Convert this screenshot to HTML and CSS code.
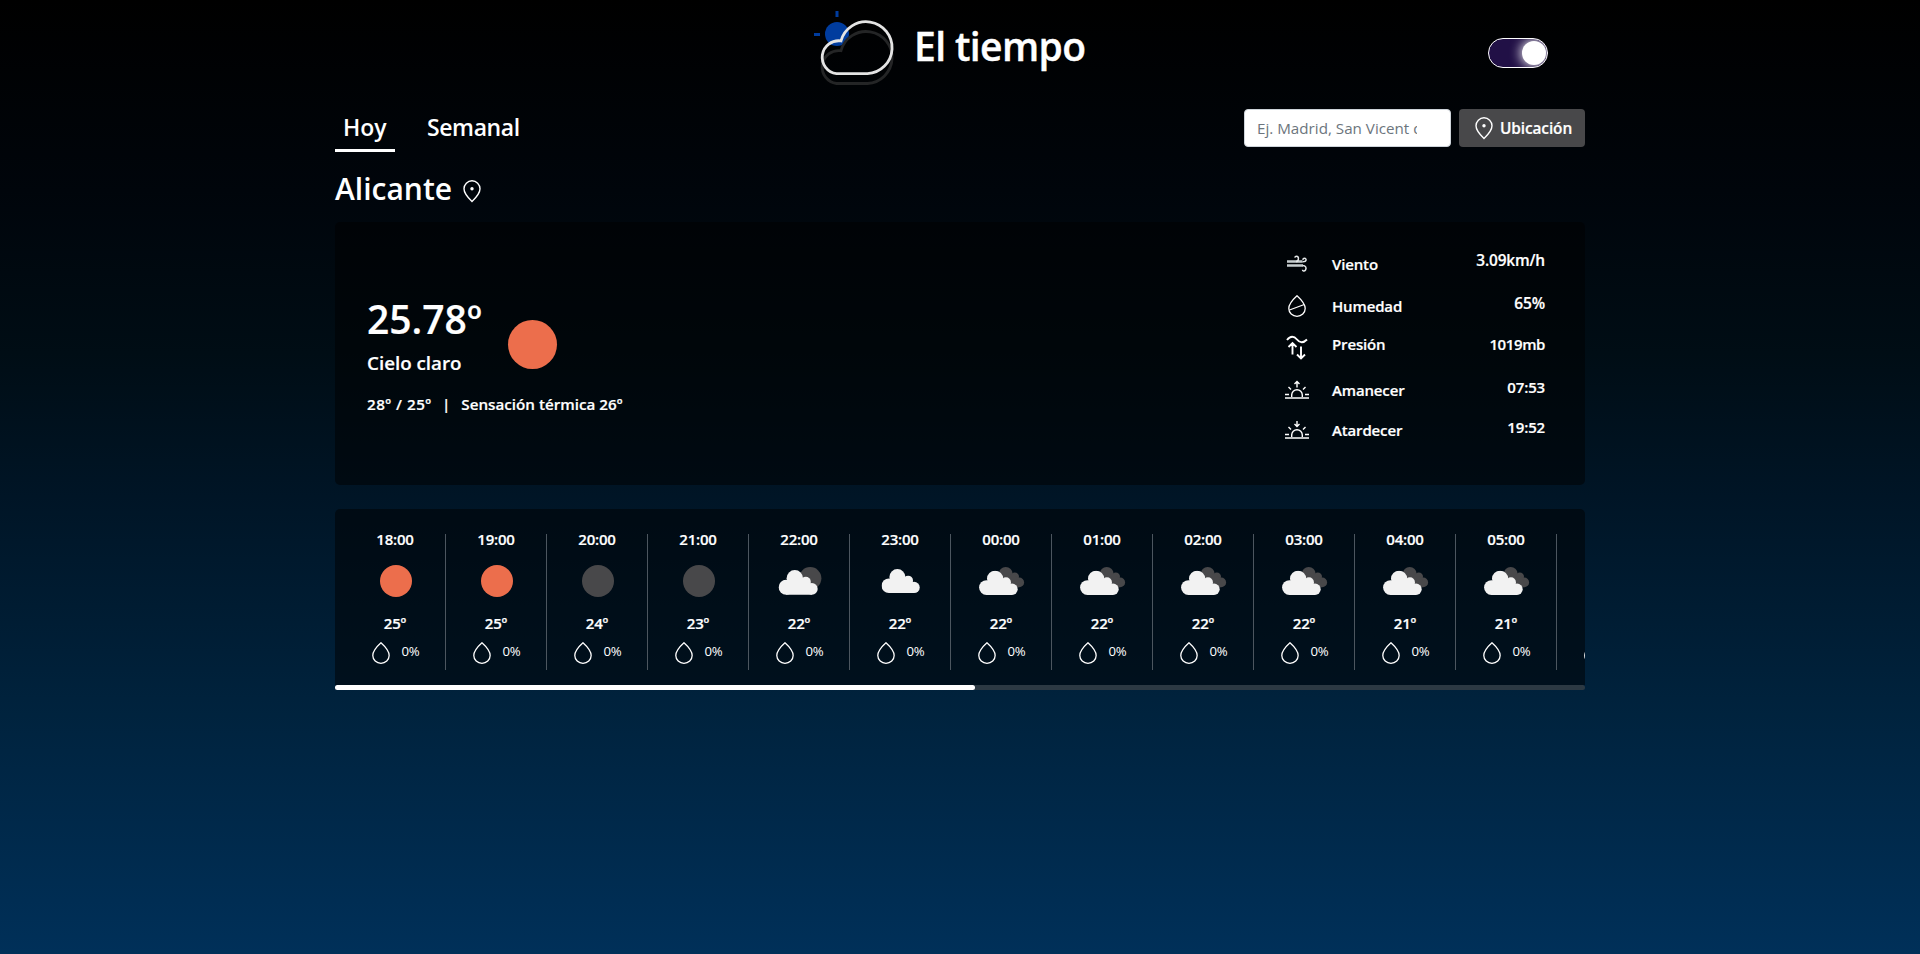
FILE: index.html
```html
<!DOCTYPE html>
<html lang="es">
<head>
<meta charset="utf-8">
<title>El tiempo</title>
<link rel="stylesheet" href="styles.css">
</head>
<body>
<svg class="defs" width="0" height="0" aria-hidden="true">
  <symbol id="pin" viewBox="0 0 20 24"><path d="M10 22.500C10 22.500 2 15 2 9.800a8 8 0 0 1 16 0C18 15 10 22.500 10 22.500Z" fill="none" stroke="#fff" stroke-width="1.400"/><circle cx="10" cy="9.800" r="1.700" fill="#fff"/></symbol>
  <symbol id="drop" viewBox="0 0 20 24"><path d="M10 1.800C10 1.800 1.800 9.200 1.800 14.600a8.200 7.700 0 0 0 16.400 0C18.200 9.200 10 1.800 10 1.800Z" fill="none" stroke="#fff" stroke-width="1.300"/></symbol>
  <symbol id="cloud" viewBox="0 0 40 25"><circle cx="7.600" cy="17.200" r="7.500"/><circle cx="16.300" cy="8.300" r="8.200"/><circle cx="27.300" cy="11.800" r="5"/><circle cx="33.400" cy="18.900" r="5.800"/><path d="M7.600 12h24l1.800 6v6.700H7.600Z"/></symbol>
  <symbol id="sun" viewBox="0 0 48 40"><circle cx="25" cy="20" r="16" fill="#ec6e4c"/></symbol>
  <symbol id="moon" viewBox="0 0 48 40"><circle cx="25" cy="20" r="16" fill="#48484a"/></symbol>
  <symbol id="few" viewBox="0 0 48 40"><circle cx="35.200" cy="17.300" r="11.200" fill="#48484a"/><use href="#cloud" x="3.500" y="9" width="40" height="25" fill="#f2f2f2"/></symbol>
  <symbol id="scattered" viewBox="0 0 48 40"><use href="#cloud" x="5.500" y="8" width="39" height="24.400" fill="#f2f2f2"/></symbol>
  <symbol id="broken" viewBox="0 0 48 40"><g fill="#48484a"><circle cx="28.700" cy="13" r="7"/><circle cx="37.800" cy="15.700" r="4.200"/><circle cx="42.200" cy="21.400" r="4.900"/><path d="M28 14h10l4 6v6.300h-8Z"/></g><use href="#cloud" x="2" y="9.600" width="39.500" height="24.700" fill="#f2f2f2"/></symbol>
</svg>
<main class="container">
  <header class="header">
    <div class="brand">
      <svg class="logo" width="96" height="96" viewBox="2 0 96 96" fill="none">
        <circle cx="37" cy="34" r="12" fill="#003c9e"/>
        <path d="M37 11v6M14 34.500h6" stroke="#003c9e" stroke-width="3"/>
        <path d="M36.500 83.500a16.500 16.500 0 1 1 4.500-32.800a26 26 0 1 1 26.500 32.800Z" stroke="#242526" stroke-width="2.800"/>
        <path d="M36.500 73.700a16.500 16.500 0 1 1 4.500-32.800a26 26 0 1 1 26.500 32.800Z" stroke="#e4e4e4" stroke-width="2.800"/>
      </svg>
      <h1 class="title">El tiempo</h1>
    </div>
    <div class="toggle"><span class="knob"></span></div>
  </header>
  <nav class="bar">
    <div class="tabs"><a class="tab active">Hoy</a><a class="tab">Semanal</a></div>
    <div class="search">
      <div class="field"><span class="placeholder">Ej. Madrid, San Vicent del Raspeig</span></div>
      <button class="locate"><svg width="20" height="24"><use href="#pin"/></svg><span>Ubicación</span></button>
    </div>
  </nav>
  <h2 class="city"><span>Alicante</span><svg width="20" height="24"><use href="#pin"/></svg></h2>
  <section class="card now">
    <div class="summary">
      <div class="main">
        <div><div class="temp">25.78º</div><div class="sky">Cielo claro</div></div>
        <span class="disc"></span>
      </div>
      <div class="feels"><span class="range">28º / 25º</span><span class="sep">|</span><span>Sensación térmica 26º</span></div>
    </div>
    <div class="details">
      <div class="row wind"><svg width="24" height="24" viewBox="0 0 24 24" fill="none"><path d="M2 9.500h15.500M2 13.500h16" stroke="#c6cdcf" stroke-width="2.700"/><path d="M11 9.500c3 0 3.300-5.300.5-5.300c-1 0-1.500.5-1.700 1.500M17.500 9.800c4.500.2 4.300-3.500 2-3.500c-1 0-1.600.6-1.700 1.500M17.500 13.500c3.500 0 4.200 2.500 3 4.500c-1.200 1.800-3 1-3-.3" stroke="#e4e8e9" stroke-width="1.500"/></svg><span class="label">Viento</span><span class="value">3.09km/h</span></div>
      <div class="row hum"><svg width="24" height="24" viewBox="-2 0 24 24"><use href="#drop" width="20" height="24"/><path d="M2.500 16 17.300 10.500" stroke="#fff" stroke-width="1.300"/></svg><span class="label">Humedad</span><span class="value">65%</span></div>
      <div class="row pres"><svg width="24" height="28" viewBox="0 -2.500 24 28" fill="none" stroke="#fff" stroke-width="1.900"><path d="M2 5.500C5.500 1 9 1.500 12 5C15 9 18.500 8.500 22 5M7.500 20V9M3.500 12.500l4-4 4 4M16 12v11M12 20l4 4 4-4"/></svg><span class="label">Presión</span><span class="value">1019mb</span></div>
      <div class="row rise"><svg width="24" height="21" viewBox="0 -2 24 21" fill="none" stroke="#fff" stroke-width="1.400"><path d="M0 18h24M0 14.500h4M20 14.500h4M6.700 17v-2a5.300 5.300 0 0 1 10.600 0v2M3.500 7l2.500 2.500M20.500 7 18 9.500M12 7.500V2M9.500 4 12 1.500 14.500 4"/></svg><span class="label">Amanecer</span><span class="value">07:53</span></div>
      <div class="row set"><svg width="24" height="21" viewBox="0 -2 24 21" fill="none" stroke="#fff" stroke-width="1.400"><path d="M0 18h24M0 14.500h4M20 14.500h4M6.700 17v-2a5.300 5.300 0 0 1 10.600 0v2M3.500 7l2.500 2.500M20.500 7 18 9.500M12 1v5.500M9.500 4 12 6.500 14.500 4"/></svg><span class="label">Atardecer</span><span class="value">19:52</span></div>
    </div>
  </section>
  <section class="card hours" id="hours"></section>
  <div class="scrollbar"><div class="thumb"></div></div>
</main>
<script src="script.js"></script>
</body>
</html>
```

FILE: styles.css
```css
* { box-sizing: border-box; }
body { margin: 0; height: 954px; overflow: hidden; color: #fff; font-family: "Open Sans", "Noto Sans", sans-serif; font-weight: 600; background: linear-gradient(180deg, #000 0%, #00050b 20%, #000d15 37%, #001526 52%, #00233e 75%, #003059 100%); }
.defs { display: block; position: absolute; }
.container { width: 1250px; margin: 0 auto; }
.container span { white-space: nowrap; }
.header { display: grid; grid-template-columns: 467px 1fr auto; height: 106px; padding-right: 37px; }
.brand { grid-column: 2; display: flex; }
.logo { flex: none; }
.title { margin: 17px 0 0 16px; font-size: 39px; line-height: 58px; font-weight: 600; letter-spacing: -.6px; white-space: nowrap; -webkit-text-stroke: .4px #fff; }
.toggle { display: flex; justify-content: flex-end; width: 60px; height: 30px; margin-top: 38px; padding: 2px 1px; border: 1px solid #fff; border-radius: 15px; background: #211046; overflow: hidden; }
.knob { width: 24px; height: 24px; border-radius: 50%; background: #fff; box-shadow: 0 0 12px 1px #fff; }
.bar { display: flex; justify-content: space-between; height: 48px; }
.tabs { display: flex; gap: 24px; }
.tab { height: 46px; padding: 3px 8px 0; font-size: 23px; line-height: 36px; letter-spacing: -.4px; border-bottom: 3px solid transparent; }
.tab.active { width: 60px; border-color: #fff; letter-spacing: 0; }
.search { display: flex; gap: 8px; padding-top: 3px; }
.field { width: 207px; height: 38px; padding: 0 33px 0 12px; border: 1px solid #ced4da; border-radius: 4px; background: #fff; color: #6c757d; font-size: 15.200px; font-weight: 400; line-height: 37px; }
.placeholder { display: block; overflow: hidden; }
.locate { display: flex; align-items: center; gap: 6px; width: 126px; height: 38px; padding: 0 0 0 15px; border: 0; border-radius: 4px; background: #48484a; color: #fff; font: 600 15.4px "Open Sans", sans-serif; letter-spacing: -.1px; -webkit-text-stroke: .2px #fff; }
.city { display: flex; height: 68px; margin: 0; padding-top: 13px; font-size: 30px; line-height: 44px; font-weight: 600; gap: 10px; }
.city svg { margin-top: 12px; }
.card { background: rgba(0, 0, 0, .5); border-radius: 5px; -webkit-text-stroke: .2px #fff; }
.now { display: flex; justify-content: space-between; height: 263px; padding: 0 40px 0 32px; }
.summary { padding-top: 69px; }
.main { display: flex; gap: 25px; }
.temp { width: 116px; font-size: 39px; line-height: 56px; }
.sky { padding-top: 1px; font-size: 18.800px; line-height: 30px; }
.disc { width: 49px; height: 49px; margin-top: 29px; border-radius: 50%; background: #ec6e4c; }
.feels { display: flex; gap: 11px; margin-top: 14px; font-size: 15.200px; line-height: 24px; }
.range { width: 64px; letter-spacing: .5px; }
.details { width: 260px; padding-top: 26px; }
.row { display: grid; grid-template-columns: 47px 1fr auto; font-size: 15px; line-height: 24px; letter-spacing: -.15px; }
.value { margin-top: -3px; text-align: right; }
.wind { height: 42px; padding-top: 4px; }
.wind .value { font-size: 15.400px; }
.hum { height: 38px; padding-top: 4px; }
.hum .value { font-size: 15.500px; }
.pres { height: 46px; padding-top: 4px; }
.pres .value { margin-top: 0; letter-spacing: -.4px; }
.rise { height: 40px; padding-top: 4px; }
.set { height: 40px; padding-top: 4px; }
.hours { display: flex; height: 176px; margin-top: 24px; padding: 25px 0 15px 10px; border-radius: 5px 5px 0 0; overflow: hidden; }
.hour { flex: none; display: flex; flex-direction: column; align-items: center; width: 101px; border-right: 1px solid #4c565f; font-size: 15px; letter-spacing: -.2px; }
.time { height: 10px; line-height: 10px; }
.sky-icon { margin: 17px 0 14px; }
.degrees { height: 16px; line-height: 16px; }
.rain { display: flex; gap: 11px; width: 49px; margin: 10px 0 0; font-size: 13.200px; font-weight: 400; line-height: 21px; -webkit-text-stroke: 0; }
.scrollbar { height: 5px; border-radius: 3px; background: #2c3943; }
.thumb { width: 640px; height: 5px; border-radius: 3px; background: #fff; }
```

FILE: script.js
```js
const hours = [
  ["18:00", "sun", "25º", "0%"], ["19:00", "sun", "25º", "0%"], ["20:00", "moon", "24º", "0%"], ["21:00", "moon", "23º", "0%"],
  ["22:00", "few", "22º", "0%"], ["23:00", "scattered", "22º", "0%"], ["00:00", "broken", "22º", "0%"], ["01:00", "broken", "22º", "0%"],
  ["02:00", "broken", "22º", "0%"], ["03:00", "broken", "22º", "0%"], ["04:00", "broken", "21º", "0%"], ["05:00", "broken", "21º", "0%"],
  ["", "moon", "", ""]
];
document.getElementById("hours").innerHTML = hours.map(([time, icon, deg, rain]) => `
  <div class="hour">
    <span class="time">${time}</span>
    <svg class="sky-icon" width="48" height="40"><use href="#${icon}"/></svg>
    <span class="degrees">${deg}</span>
    <div class="rain"><svg width="20" height="24"><use href="#drop"/></svg><span>${rain}</span></div>
  </div>`).join("");
```
